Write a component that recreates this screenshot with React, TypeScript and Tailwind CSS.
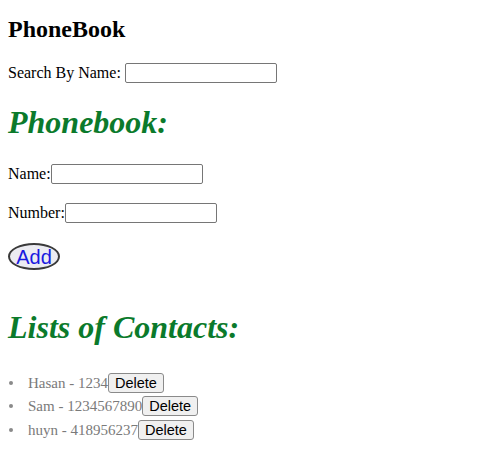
import React from "react";

const contacts = [
  { name: "Hasan", number: "1234" },
  { name: "Sam", number: "1234567890" },
  { name: "huyn", number: "418956237" },
];

export default function App() {
  return (
    <div className="min-h-[463px] bg-white px-2 text-[16px] text-black font-['Liberation_Serif',serif]">
      <h2 className="pt-[15px] text-[24px] font-bold leading-[28px]">PhoneBook</h2>
      <div className="mt-[20px] flex h-[20px] items-center leading-[20px]">
        <span className="whitespace-pre">Search By Name: </span>
        <input className="h-[20px] w-[152px] rounded-[2px] border border-[#767676] bg-white px-1 text-[13px] outline-none" />
      </div>
      <h1 className="mt-[21px] text-[32px] font-bold italic leading-[36px] text-[#0b7a2b]">Phonebook:</h1>
      <div className="mt-[24px] flex h-[20px] items-center leading-[20px]">
        <span>Name:</span>
        <input className="h-[20px] w-[152px] rounded-[2px] border border-[#767676] bg-white px-1 text-[13px] outline-none" />
      </div>
      <div className="mt-[19px] flex h-[20px] items-center leading-[20px]">
        <span>Number:</span>
        <input className="h-[20px] w-[152px] rounded-[2px] border border-[#767676] bg-white px-1 text-[13px] outline-none" />
      </div>
      <button className="mt-[20px] flex h-[27px] w-[52px] items-center justify-center rounded-[50%] border-2 border-[#3a3a3a] bg-[#ececf2] font-['Liberation_Sans',sans-serif] text-[20px] leading-none text-[#1a1ae0]">
        Add
      </button>
      <h1 className="mt-[39px] text-[32px] font-bold italic leading-[36px] text-[#0b7a2b]">Lists of Contacts:</h1>
      <ul className="mt-[26px]">
        {contacts.map((c) => (
          <li key={c.name} className="flex h-[23.5px] items-center text-[15px] text-[#7a7a7a]">
            <span className="flex w-[20px] items-center pl-[1px]">
              <span className="h-[4px] w-[4px] rounded-full bg-[#8a8a8a]" />
            </span>
            <span>
              {c.name} - {c.number}
            </span>
            <button className="h-[20px] rounded-[3px] border border-[#8a8a8a] bg-[#f0f0f0] px-[6px] font-['Liberation_Sans',sans-serif] text-[14.5px] leading-none text-black">
              Delete
            </button>
          </li>
        ))}
      </ul>
    </div>
  );
}
